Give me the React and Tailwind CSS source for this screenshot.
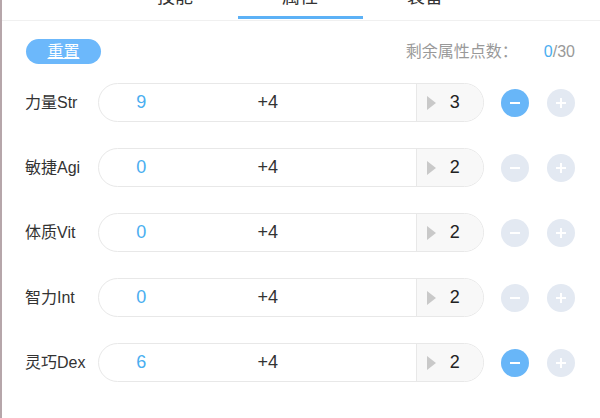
import React from "react";

const stats = [
  { label: "力量Str", base: 9, bonus: "+4", next: 3, canMinus: true },
  { label: "敏捷Agi", base: 0, bonus: "+4", next: 2, canMinus: false },
  { label: "体质Vit", base: 0, bonus: "+4", next: 2, canMinus: false },
  { label: "智力Int", base: 0, bonus: "+4", next: 2, canMinus: false },
  { label: "灵巧Dex", base: 6, bonus: "+4", next: 2, canMinus: true },
];

const tabs = ["技能", "属性", "装备"];

const CircleBtn = ({ active, plus }) => (
  <button
    className={`w-[28px] h-[28px] rounded-full flex items-center justify-center ${
      active ? "bg-[#68b6f8]" : "bg-[#e3e9f2]"
    }`}
  >
    <svg width="12" height="12" viewBox="0 0 12 12">
      <rect x="1" y="5" width="10" height="2" fill="#fff" />
      {plus && <rect x="5" y="1" width="2" height="10" fill="#fff" />}
    </svg>
  </button>
);

const StatRow = ({ stat }) => (
  <div className="flex items-center h-[39px]">
    <div className="w-[73px] text-[16px] text-[#333]">{stat.label}</div>
    <div className="w-[387px] h-[39px] border border-[#e8e8e8] rounded-full flex overflow-hidden">
      <div className="w-[317px] flex items-center text-[18px]">
        <span className="w-[85px] text-center text-[#4aaef0]">{stat.base}</span>
        <span className="w-[168px] text-center text-[#333]">{stat.bonus}</span>
      </div>
      <div className="flex-1 bg-[#f8f8f8] border-l border-[#e8e8e8] flex items-center pl-[10px]">
        <svg width="9" height="14" viewBox="0 0 9 14">
          <polygon points="0,0 9,7 0,14" fill="#c9c9c9" />
        </svg>
        <span className="ml-[14px] text-[18px] text-[#222]">{stat.next}</span>
      </div>
    </div>
    <div className="ml-[17px] flex gap-[18px]">
      <CircleBtn active={stat.canMinus} />
      <CircleBtn plus />
    </div>
  </div>
);

export default function App() {
  return (
    <div
      className="w-[600px] h-[418px] bg-white border-l-2 border-[#b6a6aa] overflow-hidden"
      style={{ fontFamily: '"Liberation Sans", "Noto Sans CJK SC", sans-serif' }}
    >
      {/* tabs, only the bottom of them is visible */}
      <div className="h-[21px] overflow-hidden border-b border-[#f0f0f0]">
        <div className="-mt-[16px] flex justify-center -ml-[2px]">
          {tabs.map((t, i) => (
            <div key={t} className="w-[125px] flex flex-col items-center">
              <span className="text-[18px] leading-[26px] text-[#333]">{t}</span>
              <div className={`mt-[6px] h-[3px] w-full ${i === 1 ? "bg-[#5cb1f6]" : ""}`} />
            </div>
          ))}
        </div>
      </div>

      <div className="pl-[23px] pr-[25px]">
        <div className="mt-[18px] flex items-center justify-between h-[25px]">
          <button className="ml-[1px] w-[75px] h-[25px] rounded-full bg-[#6cb8fb] text-white text-[16px] underline">
            重置
          </button>
          <div className="text-[16px] text-[#999]">
            剩余属性点数：<span className="ml-[26px] text-[#4aaef0]">0</span>/30
          </div>
        </div>

        <div className="mt-[19px] flex flex-col gap-[26px]">
          {stats.map((s) => (
            <StatRow key={s.label} stat={s} />
          ))}
        </div>
      </div>
    </div>
  );
}
